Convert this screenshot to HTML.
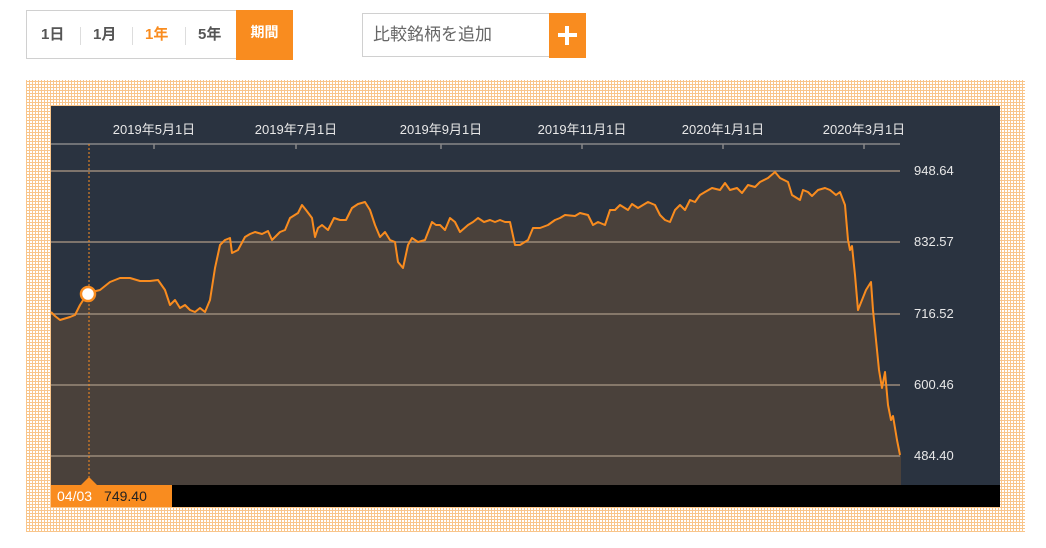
<!DOCTYPE html>
<html><head><meta charset="utf-8"><style>
body{margin:0;width:1046px;height:548px;background:#fff;position:relative;font-family:"Liberation Sans","Noto Sans CJK JP",sans-serif;overflow:hidden}
.tabs{position:absolute;left:26px;top:10px;width:266px;height:49px;border:1px solid #d0d0d0;box-sizing:border-box}
.tab{position:absolute;top:0;height:47px;line-height:47px;font-weight:bold;font-size:15px;color:#555}
.sep{position:absolute;top:16px;width:1px;height:18px;background:#ddd}
.period{position:absolute;left:236px;top:10px;width:57px;height:50px;background:#f98c1f;color:#fff;font-weight:bold;font-size:14px;text-align:center;line-height:44px}
.search{position:absolute;left:362px;top:13px;width:188px;height:44px;border:1px solid #d0d0d0;border-right:none;box-sizing:border-box;color:#666;font-size:17px;line-height:42px;padding-left:10px}
.plus{position:absolute;left:549px;top:13px;width:37px;height:45px;background:#f98c1f}
.pat{position:absolute;left:26px;top:80px;width:999px;height:452px;background-color:#fff;background-image:repeating-linear-gradient(0deg,#f9c58a 0 1px,transparent 1px 3px),repeating-linear-gradient(90deg,#f9c58a 0 1px,transparent 1px 3px)}
.chart{position:absolute;left:51px;top:106px;width:949px;height:379px;background:#2a3340}
.bar{position:absolute;left:51px;top:485px;width:949px;height:22px;background:#000}
.dl{position:absolute;top:119px;font-size:13px;color:#e8e8e8;transform:translateX(-50%)}
.pl{position:absolute;left:914px;font-size:13px;color:#e8e8e8}
</style></head><body>
<div class="tabs">
<span class="tab" style="left:14px">1日</span><div class="sep" style="left:53px"></div>
<span class="tab" style="left:66px">1月</span><div class="sep" style="left:105px"></div>
<span class="tab" style="left:118px;color:#f98c1f">1年</span><div class="sep" style="left:158px"></div>
<span class="tab" style="left:171px">5年</span>
</div>
<div class="period">期間</div>
<div class="search">比較銘柄を追加</div>
<div class="plus"><div style="position:absolute;left:9px;top:20px;width:19px;height:4px;background:#fff"></div><div style="position:absolute;left:16px;top:13px;width:4px;height:19px;background:#fff"></div></div>
<div class="pat"></div>
<div class="chart"></div>
<div class="bar"></div>
<svg style="position:absolute;left:0;top:0" width="1046" height="548">
<line x1="51" y1="144" x2="900" y2="144" stroke="#888" stroke-width="1.5"/>
<g stroke="#888" stroke-width="1.5"><line x1="154" y1="144" x2="154" y2="149"/><line x1="296" y1="144" x2="296" y2="149"/><line x1="441" y1="144" x2="441" y2="149"/><line x1="582" y1="144" x2="582" y2="149"/><line x1="723" y1="144" x2="723" y2="149"/><line x1="864" y1="144" x2="864" y2="149"/></g>
<polygon fill="#4a413b" points="51,485 51,312 55,316 60,320 70,317 75,315 80,305 87,294 92,292 100,290 110,282 120,278 130,278 140,281 150,281 158,280 165,290 170,305 175,300 180,308 185,305 190,310 195,312 200,308 205,312 210,300 215,268 220,245 225,240 230,238 232,253 238,250 245,237 250,234 255,232 262,234 268,231 272,240 280,232 285,230 290,218 298,213 302,205 306,210 312,218 315,237 318,228 322,225 328,230 334,218 340,220 346,220 352,208 358,204 365,202 370,210 375,225 380,237 385,232 390,240 395,242 398,262 403,268 408,245 412,238 418,242 425,240 432,222 436,225 440,225 445,230 450,218 455,222 460,232 468,225 473,222 478,218 484,222 490,220 495,222 500,220 505,222 510,222 515,245 520,245 528,240 533,228 540,228 548,225 555,220 560,218 565,215 575,216 580,213 588,215 593,225 598,222 605,225 610,210 615,210 620,205 628,210 632,204 638,208 643,205 648,202 655,205 660,215 665,220 670,222 675,210 680,205 685,210 690,200 695,202 700,195 705,192 712,188 720,190 725,183 730,190 737,188 742,193 748,185 755,187 760,182 768,178 775,172 780,178 788,182 792,195 800,200 803,190 808,192 812,196 818,190 825,188 830,190 836,195 840,192 845,205 848,240 850,250 852,246 855,275 858,310 862,300 866,290 871,282 873,310 876,340 879,370 882,388 885,372 888,405 891,420 893,416 897,440 900,455 901,455 901,485"/>
<g stroke="#9a8a7a" stroke-width="1.5"><line x1="51" y1="171" x2="900" y2="171"/><line x1="51" y1="242" x2="900" y2="242"/><line x1="51" y1="314" x2="900" y2="314"/><line x1="51" y1="385" x2="900" y2="385"/><line x1="51" y1="456" x2="900" y2="456"/></g>
<line x1="89" y1="144" x2="89" y2="478" stroke="#f98c1f" stroke-dasharray="2,2"/>
<polygon points="81,485 89,477 97,485" fill="#f98c1f"/>
<polyline fill="none" stroke="#f98c1f" stroke-width="2" stroke-linejoin="round" points="51,312 55,316 60,320 70,317 75,315 80,305 87,294 92,292 100,290 110,282 120,278 130,278 140,281 150,281 158,280 165,290 170,305 175,300 180,308 185,305 190,310 195,312 200,308 205,312 210,300 215,268 220,245 225,240 230,238 232,253 238,250 245,237 250,234 255,232 262,234 268,231 272,240 280,232 285,230 290,218 298,213 302,205 306,210 312,218 315,237 318,228 322,225 328,230 334,218 340,220 346,220 352,208 358,204 365,202 370,210 375,225 380,237 385,232 390,240 395,242 398,262 403,268 408,245 412,238 418,242 425,240 432,222 436,225 440,225 445,230 450,218 455,222 460,232 468,225 473,222 478,218 484,222 490,220 495,222 500,220 505,222 510,222 515,245 520,245 528,240 533,228 540,228 548,225 555,220 560,218 565,215 575,216 580,213 588,215 593,225 598,222 605,225 610,210 615,210 620,205 628,210 632,204 638,208 643,205 648,202 655,205 660,215 665,220 670,222 675,210 680,205 685,210 690,200 695,202 700,195 705,192 712,188 720,190 725,183 730,190 737,188 742,193 748,185 755,187 760,182 768,178 775,172 780,178 788,182 792,195 800,200 803,190 808,192 812,196 818,190 825,188 830,190 836,195 840,192 845,205 848,240 850,250 852,246 855,275 858,310 862,300 866,290 871,282 873,310 876,340 879,370 882,388 885,372 888,405 891,420 893,416 897,440 900,455"/>
<circle cx="88" cy="294" r="7" fill="#fff" stroke="#f98c1f" stroke-width="2.5"/>
</svg>
<span class="dl" style="left:154px">2019年5月1日</span>
<span class="dl" style="left:296px">2019年7月1日</span>
<span class="dl" style="left:441px">2019年9月1日</span>
<span class="dl" style="left:582px">2019年11月1日</span>
<span class="dl" style="left:723px">2020年1月1日</span>
<span class="dl" style="left:864px">2020年3月1日</span>
<span class="pl" style="top:163px">948.64</span>
<span class="pl" style="top:234px">832.57</span>
<span class="pl" style="top:306px">716.52</span>
<span class="pl" style="top:377px">600.46</span>
<span class="pl" style="top:448px">484.40</span>
<div style="position:absolute;left:51px;top:485px;width:121px;height:22px;background:#f98c1f;font-size:14px;line-height:22px"><span style="color:#fff;margin-left:6px">04/03</span><span style="color:#222;margin-left:12px">749.40</span></div>
</body></html>
